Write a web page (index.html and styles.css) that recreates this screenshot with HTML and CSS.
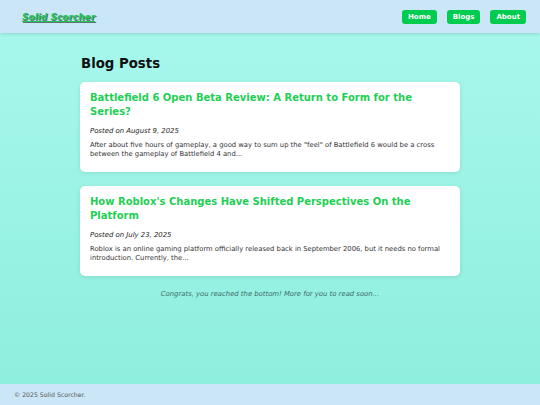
FILE: index.html
```html
<!DOCTYPE html>
<html>
<head>
<meta charset="utf-8">
<link rel="stylesheet" href="styles.css">
</head>
<body>
<header class="site-header">
  <a class="logo" href="#">Solid Scorcher</a>
  <nav class="nav">
    <a class="nav-btn" href="#">Home</a>
    <a class="nav-btn" href="#">Blogs</a>
    <a class="nav-btn" href="#">About</a>
  </nav>
</header>
<main class="content">
  <h1 class="page-title">Blog Posts</h1>
  <article class="card">
    <h2 class="card-title">Battlefield 6 Open Beta Review: A Return to Form for the Series?</h2>
    <p class="card-date">Posted on August 9, 2025</p>
    <p class="card-excerpt">After about five hours of gameplay, a good way to sum up the "feel" of Battlefield 6 would be a cross between the gameplay of Battlefield 4 and...</p>
  </article>
  <article class="card">
    <h2 class="card-title">How Roblox's Changes Have Shifted Perspectives On the Platform</h2>
    <p class="card-date">Posted on July 23, 2025</p>
    <p class="card-excerpt">Roblox is an online gaming platform officially released back in September 2006, but it needs no formal introduction. Currently, the...</p>
  </article>
  <p class="end-note">Congrats, you reached the bottom! More for you to read soon...</p>
</main>
<footer class="site-footer">© 2025 Solid Scorcher.</footer>
</body>
</html>
```
FILE: styles.css
```css
* { box-sizing: border-box; }
html, body { height: 100%; }
body {
  margin: 0;
  font-family: "DejaVu Sans", Verdana, sans-serif;
  background: linear-gradient(to bottom, #a9f8ed 0%, #8deedd 100%);
  display: flex;
  flex-direction: column;
  min-height: 405px;
}
.site-header {
  height: 33px;
  background: #cbe7f7;
  display: flex;
  align-items: center;
  justify-content: space-between;
  padding: 0 14px 0 22px;
  box-shadow: 0 1px 4px rgba(0, 80, 80, 0.18);
  position: relative;
  z-index: 1;
}
.logo {
  font-size: 9px;
  font-weight: bold;
  font-style: italic;
  color: #22c65a;
  text-decoration: underline;
  text-shadow: 1px 1px 0 rgba(40, 70, 55, 0.7);
  margin-top: 1px;
}
.nav { display: flex; gap: 10px; }
.nav-btn {
  background: #00cc4f;
  color: #fff;
  font-size: 7px;
  font-weight: bold;
  text-decoration: none;
  padding: 3px 6px;
  height: 14px;
  line-height: 8px;
  border-radius: 3px;
}
.content {
  flex: 1;
  width: 380px;
  margin: 0 auto;
  padding-top: 21px;
}
.page-title {
  margin: 0 0 8px 1px;
  font-size: 13.3px;
  line-height: 20px;
  color: #111;
}
.card {
  background: #fff;
  border-radius: 5px;
  box-shadow: 0 1px 4px rgba(0, 60, 60, 0.12);
  padding: 9px 10px 10px;
  height: 90px;
  margin-bottom: 14px;
}
.card-title {
  margin: 0;
  font-size: 10px;
  line-height: 14px;
  color: #1ecf55;
}
.card-date {
  margin: 7px 0 0;
  font-size: 6.9px;
  line-height: 10px;
  font-style: italic;
  color: #222;
}
.card-excerpt {
  margin: 5px 0 0;
  font-size: 6.8px;
  line-height: 9px;
  color: #333;
}
.end-note {
  margin: 6px 0 0;
  text-align: center;
  font-size: 6.85px;
  font-style: italic;
  color: #3d6b66;
}
.site-footer {
  height: 21px;
  background: #cbe7f7;
  display: flex;
  align-items: center;
  padding-left: 14px;
  font-size: 6.2px;
  color: #555;
}
```
